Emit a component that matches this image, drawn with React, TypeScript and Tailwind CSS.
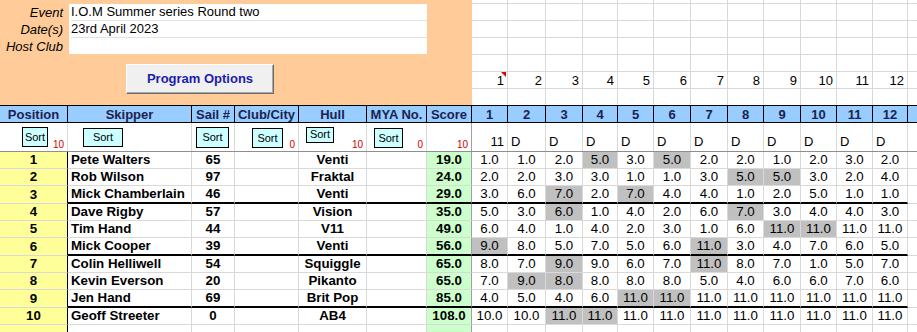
import clsx from "clsx";

const COLS =
  "grid grid-cols-[68px_124px_43px_64px_68px_60px_45px_36px_38px_37px_35px_36px_37px_37px_36px_37px_36px_36px_35px_1fr]";
const RACE_COLS =
  "grid grid-cols-[36px_38px_37px_35px_36px_37px_37px_36px_37px_36px_36px_35px_1fr]";

type Entry = {
  pos: number;
  name: string;
  sail: number;
  hull: string;
  score: string;
  races: number[];
  drop: number[];
};

const entries: Entry[] = [
  { pos: 1, name: "Pete Walters", sail: 65, hull: "Venti", score: "19.0", races: [1, 1, 2, 5, 3, 5, 2, 2, 1, 2, 3, 2], drop: [4, 6] },
  { pos: 2, name: "Rob Wilson", sail: 97, hull: "Fraktal", score: "24.0", races: [2, 2, 3, 3, 1, 1, 3, 5, 5, 3, 2, 4], drop: [8, 9] },
  { pos: 3, name: "Mick Chamberlain", sail: 46, hull: "Venti", score: "29.0", races: [3, 6, 7, 2, 7, 4, 4, 1, 2, 5, 1, 1], drop: [3, 5] },
  { pos: 4, name: "Dave Rigby", sail: 57, hull: "Vision", score: "35.0", races: [5, 3, 6, 1, 4, 2, 6, 7, 3, 4, 4, 3], drop: [3, 8] },
  { pos: 5, name: "Tim Hand", sail: 44, hull: "V11", score: "49.0", races: [6, 4, 1, 4, 2, 3, 1, 6, 11, 11, 11, 11], drop: [9, 10] },
  { pos: 6, name: "Mick Cooper", sail: 39, hull: "Venti", score: "56.0", races: [9, 8, 5, 7, 5, 6, 11, 3, 4, 7, 6, 5], drop: [1, 7] },
  { pos: 7, name: "Colin Helliwell", sail: 54, hull: "Squiggle", score: "65.0", races: [8, 7, 9, 9, 6, 7, 11, 8, 7, 1, 5, 7], drop: [3, 7] },
  { pos: 8, name: "Kevin Everson", sail: 20, hull: "Pikanto", score: "65.0", races: [7, 9, 8, 8, 8, 8, 5, 4, 6, 6, 7, 6], drop: [2, 3] },
  { pos: 9, name: "Jen Hand", sail: 69, hull: "Brit Pop", score: "85.0", races: [4, 5, 4, 6, 11, 11, 11, 11, 11, 11, 11, 11], drop: [5, 6] },
  { pos: 10, name: "Geoff Streeter", sail: 0, hull: "AB4", score: "108.0", races: [10, 10, 11, 11, 11, 11, 11, 11, 11, 11, 11, 11], drop: [3, 4] },
];

const raceNums = [1, 2, 3, 4, 5, 6, 7, 8, 9, 10, 11, 12];
const headers = ["Position", "Skipper", "Sail #", "Club/City", "Hull", "MYA No.", "Score"];

function SortButton({ className }: { className: string }) {
  return (
    <div className={clsx("flex justify-center border border-black bg-[#ccffff] text-[11px] leading-none", className)}>
      Sort
    </div>
  );
}

function Count({ value }: { value: string }) {
  return <span className="absolute bottom-[1px] right-[3px] text-[10px] leading-none text-[#d00000]">{value}</span>;
}

function TopArea() {
  return (
    <div className="flex h-[105px]">
      <div className="w-[472px] shrink-0 bg-[#ffcc99] pt-[4px]">
        <div className="flex">
          <div className="w-[69px] pr-[6px] text-right italic">
            <div className="h-[17px] leading-[17px]">Event</div>
            <div className="h-[17px] leading-[17px]">Date(s)</div>
            <div className="h-[16px] leading-[17px]">Host Club</div>
          </div>
          <div className="w-[358px] bg-white pl-[2px]">
            <div className="h-[17px] border-b border-[#e2e2e2] leading-[16px]">I.O.M Summer series Round two</div>
            <div className="h-[17px] border-b border-[#e2e2e2] leading-[16px]">23rd April 2023</div>
            <div className="h-[16px]" />
          </div>
        </div>
        <div className="ml-[126px] mt-[10px] flex h-[30px] w-[148px] items-center justify-center border border-t-white border-l-white border-r-[#6a6a6a] border-b-[#6a6a6a] bg-[#f0f0f0] text-[13px] font-bold text-[#1c1cae] shadow-[inset_-1px_-1px_0_#a8a8a8]">
          Program Options
        </div>
      </div>
      <div className={clsx(RACE_COLS, "flex-1 grid-rows-[4px_17px_17px_17px_17px_17px_16px]")}>
        {Array.from({ length: 7 }).map((_, r) =>
          Array.from({ length: 13 }).map((_, c) => (
            <div
              key={`${r}-${c}`}
              className={clsx(
                "relative flex items-center justify-end pr-[3px] leading-none",
                c < 12 && "border-r border-[#d9d9d9]",
                r < 6 && "border-b border-[#d9d9d9]"
              )}
            >
              {r === 5 && c < 12 ? raceNums[c] : null}
              {r === 5 && c === 0 ? (
                <span className="absolute right-[1px] top-0 h-0 w-0 border-l-[5px] border-t-[5px] border-l-transparent border-t-[#e00000]" />
              ) : null}
            </div>
          ))
        )}
      </div>
    </div>
  );
}

function HeaderRow() {
  return (
    <div className={clsx(COLS, "h-[18px] border-y border-black bg-[#99ccff] text-[13px] font-bold text-[#1a2350]")}>
      {headers.map((h) => (
        <div key={h} className="flex items-center justify-center overflow-hidden whitespace-nowrap border-r border-black leading-none">
          {h}
        </div>
      ))}
      {raceNums.map((n) => (
        <div key={n} className="flex items-center justify-center border-r border-black leading-none">
          {n}
        </div>
      ))}
      <div />
    </div>
  );
}

function SortRow() {
  const light = "relative border-r border-[#d9d9d9]";
  return (
    <div className={clsx(COLS, "h-[29px] border-b border-[#8e8e8e]")}>
      <div className={light}>
        <SortButton className="ml-[22px] mt-[4px] h-[20px] w-[26px] items-center" />
        <Count value="10" />
      </div>
      <div className={light}>
        <SortButton className="ml-[15px] mt-[5px] h-[19px] w-[40px] items-center" />
      </div>
      <div className={light}>
        <SortButton className="ml-[4px] mt-[4px] h-[21px] w-[33px] items-center" />
      </div>
      <div className={light}>
        <SortButton className="ml-[17px] mt-[5px] h-[20px] w-[31px] items-center" />
        <Count value="0" />
      </div>
      <div className={light}>
        <SortButton className="ml-[7px] mt-[4px] h-[16px] w-[28px] items-start pt-[1px]" />
        <Count value="10" />
      </div>
      <div className={light}>
        <SortButton className="ml-[7px] mt-[5px] h-[20px] w-[29px] items-center" />
        <Count value="0" />
      </div>
      <div className="relative border-r border-[#a0a0a0]">
        <Count value="10" />
      </div>
      {raceNums.map((n) => (
        <div
          key={n}
          className={clsx(
            "flex items-end border-r border-[#d9d9d9] pb-[3px] text-[13px] leading-none",
            n === 1 ? "justify-end pr-[3px]" : "justify-start pl-[3px]"
          )}
        >
          {n === 1 ? "11" : "D"}
        </div>
      ))}
      <div />
    </div>
  );
}

function DataRow({ e, thick }: { e: Entry; thick: boolean }) {
  const line = thick ? "border-b-2 border-b-black" : "border-b border-b-[#d9d9d9]";
  const cell = "flex items-center overflow-hidden whitespace-nowrap leading-none";
  return (
    <div className={clsx(COLS, thick ? "h-[18px]" : "h-[17px]", "text-[13.3px]")}>
      <div className={clsx(cell, "justify-center border-b border-r border-b-[#d9d9d9] border-r-black bg-[#ffff99] font-bold")}>
        {e.pos}
      </div>
      <div className={clsx(cell, line, "border-r border-r-[#d9d9d9] pl-[3px] font-bold")}>{e.name}</div>
      <div className={clsx(cell, line, "justify-center border-r border-r-[#d9d9d9] font-bold")}>{e.sail}</div>
      <div className={clsx(cell, line, "border-r border-r-[#d9d9d9]")} />
      <div className={clsx(cell, line, "justify-center border-r border-r-[#d9d9d9] font-bold")}>{e.hull}</div>
      <div className={clsx(cell, line, "border-r border-r-[#d9d9d9]")} />
      <div className={clsx(cell, line, "justify-center border-r border-r-[#a0a0a0] bg-[#ccffcc] font-bold")}>
        {e.score}
      </div>
      {e.races.map((v, i) => (
        <div
          key={i}
          className={clsx(
            cell,
            line,
            "justify-center border-r border-r-[#d9d9d9]",
            e.drop.includes(i + 1) && "bg-[#c0c0c0]"
          )}
        >
          {v.toFixed(1)}
        </div>
      ))}
      <div className={clsx("border-b border-b-[#d9d9d9]")} />
    </div>
  );
}

function EmptyRow() {
  return (
    <div className={clsx(COLS, "h-[17px]")}>
      <div className="border-r border-black bg-[#ffff99]" />
      <div className="border-r border-[#d9d9d9]" />
      <div className="border-r border-[#d9d9d9]" />
      <div className="border-r border-[#d9d9d9]" />
      <div className="border-r border-[#d9d9d9]" />
      <div className="border-r border-[#d9d9d9]" />
      <div className="border-r border-[#a0a0a0] bg-[#ccffcc]" />
      {raceNums.map((n) => (
        <div key={n} className="border-r border-[#d9d9d9]" />
      ))}
      <div />
    </div>
  );
}

export default function App() {
  return (
    <div className="h-[332px] w-[917px] overflow-hidden bg-white font-['Liberation_Sans',Arial,sans-serif] text-[13px] text-black">
      <TopArea />
      <HeaderRow />
      <SortRow />
      {entries.map((e, i) => (
        <DataRow key={e.pos} e={e} thick={i === 2 || i === 5 || i === 8} />
      ))}
      <EmptyRow />
    </div>
  );
}
